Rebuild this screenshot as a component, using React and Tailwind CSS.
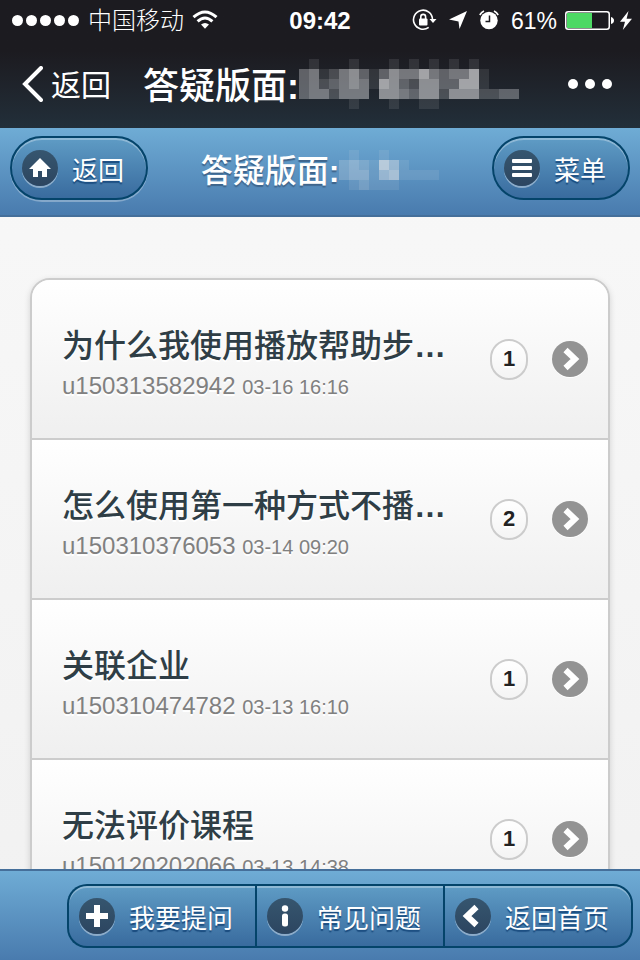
import clsx from "clsx";

const posts = [
  { id: 1, title: "为什么我使用播放帮助步", cut: true, user: "u150313582942", date: "03-16 16:16", count: 1 },
  { id: 2, title: "怎么使用第一种方式不播", cut: true, user: "u150310376053", date: "03-14 09:20", count: 2 },
  { id: 3, title: "关联企业", user: "u150310474782", date: "03-13 16:10", count: 1 },
  { id: 4, title: "无法评价课程", user: "u150120202066", date: "03-13 14:38", count: 1 },
];

// One digit per 10px block, 0 is clear and 9 is the brightest
const navMask = [
  "0100010001010101010000",
  "3412453135446434461000",
  "3423454165325533661000",
  "3442444055435525552233",
  "0000010001001100000000",
];

const headerMask = [
  "0100100000",
  "2321641000",
  "2331451111",
  "0121110000",
];

const Mosaic = ({ rows }) => {
  const width = rows[0].length * 10;
  const height = rows.length * 10;
  return (
    <svg
      width={width}
      height={height}
      viewBox={`0 0 ${width} ${height}`}
      className="shrink-0"
      shapeRendering="crispEdges"
      aria-hidden="true"
    >
      {rows.map((row, y) =>
        row.split("").map((level, x) => (
          <rect
            key={`${x}-${y}`}
            x={x * 10}
            y={y * 10}
            width="10"
            height="10"
            fill="#e4e4e6"
            opacity={Number(level) / 9}
          />
        ))
      )}
    </svg>
  );
};

const glyphs = {
  home: <path d="M18 8 29 19h-4v8h-5v-6h-4v6h-5v-8H7z" fill="#fff" />,
  bars: (
    <g fill="#fff">
      <rect x="8" y="9" width="20" height="4" rx="1" />
      <rect x="8" y="16" width="20" height="4" rx="1" />
      <rect x="8" y="23" width="20" height="4" rx="1" />
    </g>
  ),
  plus: <path d="M18 7v22M7 18h22" stroke="#fff" strokeWidth="6" fill="none" />,
  info: (
    <g fill="#fff">
      <circle cx="18" cy="10.5" r="3.2" />
      <rect x="15" y="15.5" width="6" height="13" rx="2.5" />
    </g>
  ),
  left: (
    <path d="M21.500 9 12 18l9.500 9" stroke="#fff" strokeWidth="6" fill="none" />
  ),
  right: (
    <path d="M13.500 9 23 18l-9.500 9" stroke="#fff" strokeWidth="6" fill="none" />
  ),
};

const RoundIcon = ({ name, light }) => (
  <span
    className={clsx(
      "size-9 shrink-0 rounded-full",
      light
        ? "bg-[#939393] shadow-[0_1px_0_#fff]"
        : "bg-linear-to-b from-[#36566f] to-[#2c4560] shadow-[0_2px_0_rgba(255,255,255,0.4)]"
    )}
  >
    <svg viewBox="0 0 36 36" className="size-9" aria-hidden="true">
      {glyphs[name]}
    </svg>
  </span>
);

const blueButton =
  "flex h-16 items-center gap-3.5 border-2 border-[#04446a] bg-linear-to-b from-[#5f9cc5] to-[#396b9e] pl-2.5 pr-[22px] text-[26px] leading-8 text-white [text-shadow:0_2px_1px_#194b7e]";

const StatusBar = () => (
  <div className="grid h-10 grid-cols-[1fr_auto_1fr] items-center px-3 text-white">
    <div className="flex items-center gap-2">
      <span className="flex gap-[3px]">
        {[0, 1, 2, 3, 4].map((dot) => (
          <span key={dot} className="size-[11px] rounded-full bg-white" />
        ))}
      </span>
      <span className="ml-px pt-0.5 text-[24px] font-light leading-8">中国移动</span>
      <svg width="26" height="20" viewBox="0 0 26 20" fill="none" stroke="#fff" aria-hidden="true">
        <path d="M1.5 7.2Q13-3.2 24.5 7.2" strokeWidth="3" />
        <path d="M5.6 11.3Q13 4.6 20.4 11.3" strokeWidth="3" />
        <path d="M9 14.6Q13 11.2 17 14.6L13 18.8z" fill="#fff" stroke="none" />
      </svg>
    </div>
    <span className="pt-0.5 text-[24px] font-bold leading-8">09:42</span>
    <div className="flex items-center justify-end">
      <svg width="25" height="22" viewBox="0 0 25 22" fill="none" aria-hidden="true">
        <path d="M20.5 10.5a9.5 9.5 0 1 0-3.8 7.8" stroke="#fff" strokeWidth="1.6" />
        <path d="M17.5 10H24.5L21 14z" fill="#fff" />
        <rect x="7" y="9.5" width="8.5" height="7" rx="1" fill="#fff" />
        <path d="M8.8 10V7.8a2.4 2.4 0 0 1 4.8 0V10" stroke="#fff" strokeWidth="1.6" />
      </svg>
      <svg width="18" height="18" viewBox="0 0 18 18" className="ml-3" aria-hidden="true">
        <path d="M18 0 10.500 18 9.500 10.500 0 8.500z" fill="#fff" />
      </svg>
      <svg width="20" height="20" viewBox="0 0 20 20" className="ml-3" aria-hidden="true">
        <circle cx="10" cy="10.500" r="8.700" fill="#fff" />
        <path d="M.8 5A10 10 0 0 1 5 1M19.200 5A10 10 0 0 0 15 1" stroke="#fff" strokeWidth="1.600" fill="none" />
        <path d="M10.500 5.500V11.500H6.500" stroke="#1c1b20" strokeWidth="1.500" fill="none" />
      </svg>
      <span className="ml-3 pt-0.5 text-[23px] leading-8">61%</span>
      <svg width="49" height="19" viewBox="0 0 49 19" className="ml-2" aria-hidden="true">
        <rect x=".75" y=".75" width="43.5" height="17.5" rx="2.5" fill="none" stroke="#fff" strokeWidth="1.5" />
        <rect x="2" y="2" width="25" height="15" fill="#4cd964" />
        <path d="M46 6q3 1 3 3.500t-3 3.500z" fill="#fff" />
      </svg>
      <svg width="12" height="19" viewBox="0 0 12 19" className="ml-1.5 -mr-1" aria-hidden="true">
        <path d="M8.500 0 0 10.800h5L2.800 19 12 7.800H6.600z" fill="#fff" />
      </svg>
    </div>
  </div>
);

const PostRow = ({ post }) => (
  <li className="border-t-2 border-[#ccc] first:border-t-0">
    <a
      href="#post"
      className="flex h-[158px] items-center bg-linear-to-b from-white to-[#efefef] pl-[30px] pr-5 [text-shadow:0_2px_0_#fff]"
    >
      <div className="min-w-0 flex-1 pt-2.5">
        <h2 className="truncate text-[32px] font-medium leading-10 text-[#2f3e46]">
          {post.title}
          {post.cut && <span className="font-bold">…</span>}
        </h2>
        <p className="mt-1 text-[24px] leading-8 text-[#808080]">
          {post.user} <small className="text-[20px]">{post.date}</small>
        </p>
      </div>
      <span className="ml-6 flex h-[41px] w-[38px] items-center justify-center rounded-[19px] border-2 border-[#ccc] bg-linear-to-b from-white to-[#f4f4f4] text-[22px] font-bold leading-8 text-[#222]">
        {post.count}
      </span>
      <span className="ml-6 flex">
        <RoundIcon name="right" light />
      </span>
    </a>
  </li>
);

const App = () => {
  return (
    <div className="flex h-screen flex-col overflow-hidden bg-linear-to-b from-[#f9f9f9] to-[#f1f1f1] font-['Liberation_Sans','Noto_Sans_CJK_SC',sans-serif]">
      <div className="shrink-0 bg-linear-to-b from-[#1c1b20] from-40% to-[#222f3a] text-white">
        <StatusBar />
        <nav className="flex h-22 items-center pl-[22px] pr-7">
          <button type="button" className="flex items-center gap-2 text-[30px] leading-10">
            <svg width="21" height="36" viewBox="0 0 21 36" fill="none" aria-hidden="true">
              <path d="M19 2 3 18l16 16" stroke="#fff" strokeWidth="4" strokeLinecap="round" />
            </svg>
            <span className="pt-1">返回</span>
          </button>
          <div className="ml-8 flex items-center text-[36px] font-medium leading-10">
            <span className="pt-1.5">
              答疑版面<b>:</b>
            </span>
            <Mosaic rows={navMask} />
          </div>
          <button type="button" aria-label="更多" className="ml-auto flex h-10 items-center gap-[7px]">
            <span className="size-2.5 rounded-full bg-white" />
            <span className="size-2.5 rounded-full bg-white" />
            <span className="size-2.5 rounded-full bg-white" />
          </button>
        </nav>
      </div>

      <header className="flex shrink-0 items-center justify-between border-b-2 border-[#456f9a] bg-linear-to-b from-[#6facd5] to-[#497bae] px-2.5 pb-[15px] pt-2">
        <a
          href="#back"
          className={clsx(blueButton, "rounded-full shadow-[inset_0_2px_0_rgba(255,255,255,0.3),0_2px_0_rgba(255,255,255,0.3)]")}
        >
          <RoundIcon name="home" />
          <span className="pt-1.5">返回</span>
        </a>
        <h1 className="flex items-center pt-1 text-[32px] font-medium leading-10 text-white [text-shadow:0_2px_1px_#3e648b]">
          <span className="pt-0.5">
            答疑版面<b>:</b>
          </span>
          <Mosaic rows={headerMask} />
        </h1>
        <button
          type="button"
          className={clsx(blueButton, "rounded-full shadow-[inset_0_2px_0_rgba(255,255,255,0.3)]")}
        >
          <RoundIcon name="bars" />
          <span className="pt-1.5">菜单</span>
        </button>
      </header>

      <main className="min-h-0 flex-1 overflow-hidden px-[30px] pt-[61px]">
        <ul className="overflow-hidden rounded-[20px] border-2 border-[#ccc] shadow-[0_2px_6px_rgba(0,0,0,0.15)]">
          {posts.map((post) => (
            <PostRow key={post.id} post={post} />
          ))}
        </ul>
      </main>

      <footer className="flex shrink-0 justify-end border-t-2 border-[#456f9a] bg-linear-to-b from-[#6facd5] to-[#497bae] pb-3 pr-[7px] pt-[13px]">
        <a
          href="#ask"
          className={clsx(blueButton, "rounded-l-[20px] border-r-0 shadow-[inset_0_2px_0_rgba(255,255,255,0.3)]")}
        >
          <RoundIcon name="plus" />
          <span className="pt-1.5">我要提问</span>
        </a>
        <a
          href="#faq"
          className={clsx(blueButton, "border-r-0 shadow-[inset_0_2px_0_rgba(255,255,255,0.3)]")}
        >
          <RoundIcon name="info" />
          <span className="pt-1.5">常见问题</span>
        </a>
        <a
          href="#home"
          className={clsx(blueButton, "rounded-r-[20px] shadow-[inset_0_2px_0_rgba(255,255,255,0.3)]")}
        >
          <RoundIcon name="left" />
          <span className="pt-1.5">返回首页</span>
        </a>
      </footer>
    </div>
  );
};

export default App;
